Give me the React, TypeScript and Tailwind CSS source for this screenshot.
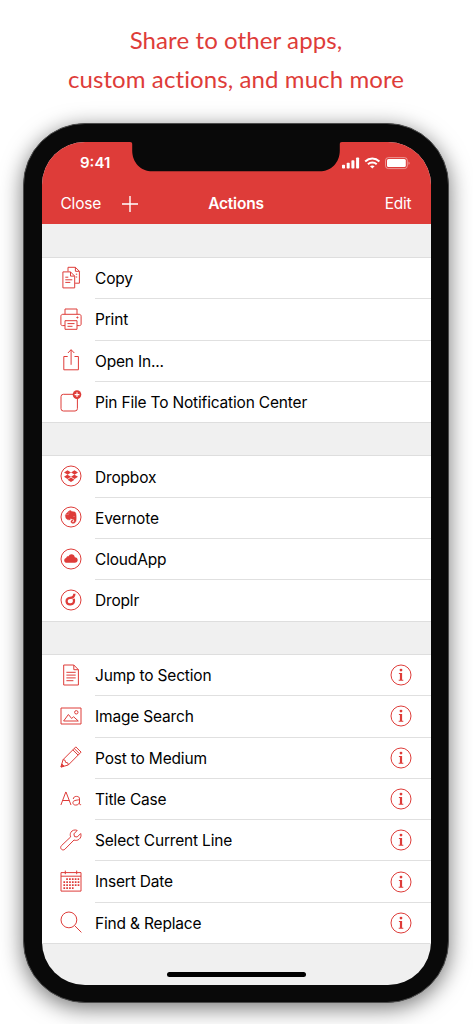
import type { ReactNode } from 'react'
import { FaDropbox, FaEvernote } from 'react-icons/fa'

interface Action {
  label: string
  icon: ReactNode
}

const shareActions: Action[] = [
  {
    label: 'Copy',
    icon: (
      <>
        <path d="M3.9 5.9h7.6l4.2 4.2v11.8H3.9zM11.5 5.9v4.2h4.2" />
        <path d="M9 5.5V1.3h7.4l4 4v11.9h-4.3M16.4 1.3v4h4" />
        <path d="M6.3 11.2h3M6.3 13.8h7M6.3 16.4h5M16.8 8.2h1.4M16.8 11h1.4" />
      </>
    ),
  },
  {
    label: 'Print',
    icon: (
      <>
        <path d="M6 7.3V2h12v5.3" />
        <path d="M6 18.6H3.4c-.9 0-1.5-.6-1.5-1.5V9.2c0-1.1.8-1.9 1.9-1.9h16.4c1.1 0 1.9.8 1.9 1.9v7.9c0 .9-.6 1.5-1.5 1.5H18" />
        <path d="M6 13.7h12v8.6H6zM8.5 16.6h7M8.5 19.3h5" />
        <circle cx="18.4" cy="10.5" r=".6" fill="currentColor" />
      </>
    ),
  },
  {
    label: 'Open In...',
    icon: <path d="M8.7 8.5H4.8v13.3h14.6V8.5h-3.9M12.1 16.8V1.8M8.9 5l3.2-3.3L15.3 5" />,
  },
  {
    label: 'Pin File To Notification Center',
    icon: (
      <>
        <rect x="2" y="5.3" width="16.4" height="16.7" rx="2.4" />
        <circle cx="18" cy="5.6" r="4.3" fill="currentColor" stroke="none" />
        <path d="M18 3.2V8M15.6 5.6h4.8" stroke="white" strokeWidth="1.1" />
      </>
    ),
  },
]

const serviceActions: Action[] = [
  {
    label: 'Dropbox',
    icon: (
      <>
        <circle cx="12" cy="12" r="10" />
        <FaDropbox x="5" y="5.1" size={14} stroke="none" />
      </>
    ),
  },
  {
    label: 'Evernote',
    icon: (
      <>
        <circle cx="12" cy="12" r="10" />
        <FaEvernote x="4.5" y="4.7" size={14.6} stroke="currentColor" strokeWidth="14" />
      </>
    ),
  },
  {
    label: 'CloudApp',
    icon: (
      <>
        <circle cx="12" cy="12" r="10" />
        <path
          d="M8 15.8c-1.6 0-2.8-1-2.8-2.4 0-1.3.9-2.2 2-2.4.1-1.3 1.1-2 2.3-1.8.6-1.3 1.6-2 2.9-2 1.9 0 3.2 1.3 3.4 3 1.7.1 2.9 1.3 2.9 2.8s-1.2 2.8-2.9 2.8z"
          fill="currentColor"
          stroke="none"
        />
      </>
    ),
  },
  {
    label: 'Droplr',
    icon: (
      <>
        <circle cx="12" cy="12" r="10" />
        <path d="M11 9.9c-2.3.2-3.6 1.6-3.4 3.6.2 1.9 1.900 3.100 4 2.900 2.300-.2 3.600-1.800 3.400-3.800l-.3-1.900M11 9.900c2.700-.1 4.300-1.400 4.400-4.200" strokeWidth="2.3" />
      </>
    ),
  },
]

const textActions: Action[] = [
  {
    label: 'Jump to Section',
    icon: (
      <>
        <path d="M4.7 2h10.1l4.6 4.7V22H4.7zM14.8 2v4.7h4.6" />
        <path d="M7.4 9.3h9.3M7.4 12.1h9.3M7.4 14.9h9.3M7.4 17.7h7" />
      </>
    ),
  },
  {
    label: 'Image Search',
    icon: (
      <>
        <path d="M2 4h20v16H2z" />
        <path d="M4.6 17l4.8-6.5 3.3 4 1.8-1.8 4.8 4.3z" />
        <circle cx="17.3" cy="8.3" r="1.7" />
      </>
    ),
  },
  {
    label: 'Post to Medium',
    icon: (
      <>
        <path d="M2 22l2-7.3L16.8 1.9l5.3 5.2L9.3 20zM4 14.7l1.9.4.7 2.3 2.2.5.5 2.1M13.8 4.9l5.3 5.2M15.2 3.5l5.3 5.2" />
        <path d="M2 22l.8-3 2.2 2.2z" fill="currentColor" />
      </>
    ),
  },
  {
    label: 'Title Case',
    icon: (
      <>
        <path d="M1.9 18L6.8 5h.2l5 13M3.7 13.5h6.6" />
        <path d="M14.3 12c.1-1.7 1.2-2.6 3.2-2.6 2 0 3 .9 3 2.5v4.6c0 .9.5 1.3 1.6 1.1M20.5 12.3c-.3 1.2-6.6.2-6.6 3.4 0 1.5 1.1 2.4 2.8 2.4 2.3 0 3.8-1.4 3.8-3.4" />
      </>
    ),
  },
  {
    label: 'Select Current Line',
    icon: (
      <path d="M18.2 2.4c-2.4-1-5.1-.2-6.3 1.9-.8 1.4-.9 3-.2 4.6L2.5 17.6c-1.1 1.1-1.1 2.6-.1 3.6s2.6 1 3.6-.1l9-9.1c1.7.7 3.5.5 4.9-.6 1.9-1.4 2.6-3.7 1.8-5.9L18.2 9l-2.7-.4-.6-2.7z" />
    ),
  },
  {
    label: 'Insert Date',
    icon: (
      <>
        <path d="M2 3.6h20v18.5H2zM2 7.2h20M6.3 1.6v3.6M17.7 1.6v3.6" />
        <path d="M7.2 10.2h13M4.4 13.2h16M4.4 16.2h16M4.4 19.2h10.2" strokeWidth="1.7" strokeDasharray="1.7 1.15" />
      </>
    ),
  },
  {
    label: 'Find & Replace',
    icon: (
      <>
        <circle cx="9.9" cy="9.9" r="7.9" />
        <path d="M15.6 15.6l6.8 6.8" />
      </>
    ),
  },
]

function InfoIcon() {
  return (
    <svg width="24" height="24" viewBox="0 0 24 24" fill="none" stroke="currentColor" className="mr-[17.5px] shrink-0 text-[#de3c39]">
      <circle cx="12" cy="12" r="10" />
      <circle cx="12" cy="7.1" r="1.4" fill="currentColor" stroke="none" />
      <path d="M9.9 10.1h3.2v6.7h1.2v1H9.7v-1h1.2v-5.7h-1z" fill="currentColor" stroke="none" />
    </svg>
  )
}

function ActionGroup({ actions, info = false }: { actions: Action[]; info?: boolean }) {
  return (
    <ul className="border-b border-[#dedede] bg-white shadow-[0_-1px_0_#dedede]">
      {actions.map((action, i) => {
        const last = i === actions.length - 1
        return (
          <li key={action.label} className={`flex items-center pl-[16.5px] ${last ? 'h-[40.3px]' : 'h-[41.3px]'}`}>
            <svg
              width="24"
              height="24"
              viewBox="0 0 24 24"
              fill="none"
              stroke="currentColor"
              strokeLinejoin="round"
              className="mb-[2px] shrink-0 overflow-visible text-[#de3c39]"
            >
              {action.icon}
            </svg>
            <div className={`ml-[12.5px] flex h-full flex-1 items-center justify-between ${last ? '' : 'border-b border-[#e0e0e0]'}`}>
              <span className="whitespace-nowrap pt-px text-[15.5px] tracking-[-0.18px] text-black">{action.label}</span>
              {info && <InfoIcon />}
            </div>
          </li>
        )
      })}
    </ul>
  )
}

function StatusIcons() {
  return (
    <svg width="70" height="14" viewBox="0 0 70 14" fill="white">
      <rect x="1" y="8.8" width="3" height="3.7" rx=".8" />
      <rect x="5.7" y="6.8" width="3" height="5.7" rx=".8" />
      <rect x="10.4" y="4.3" width="3" height="8.2" rx=".8" />
      <rect x="15.1" y="1.5" width="3" height="11" rx=".8" />
      <g fill="none" stroke="white" strokeWidth="2">
        <path d="M24.2 5.4c4-3.8 10.2-3.8 14.2 0" />
        <path d="M26.9 8.3c2.5-2.3 6.3-2.3 8.8 0" />
      </g>
      <path d="M31.3 12.6L29 10.3c1.3-1.1 3.3-1.1 4.6 0z" />
      <rect x="44.5" y="1.6" width="21.8" height="11" rx="2.8" fill="none" stroke="white" strokeOpacity=".45" />
      <rect x="46" y="3.1" width="18.8" height="8" rx="1.5" />
      <path d="M67.5 5.4c1.5.5 1.5 2.9 0 3.4z" opacity=".5" />
    </svg>
  )
}

// Black cut-out with flared upper corners
function Notch() {
  return (
    <svg width="212" height="30" viewBox="0 0 212 30" className="absolute left-[88px] top-0" fill="#090909">
      <path d="M0 0h212c-1.6 0-2.2.7-2.2 2.2v6.3c0 12-8.6 20.8-20.2 20.8H22.4C10.8 29.3 2.2 20.5 2.2 8.5V2.2C2.2.7 1.6 0 0 0z" />
    </svg>
  )
}

export default function App() {
  return (
    <div className="flex h-[1024px] w-[473px] flex-col items-center overflow-hidden bg-white">
      <h1 className="mr-px h-[123px] shrink-0 pt-5 text-center font-['Lato',sans-serif] text-[24px] leading-[39px] tracking-[0.1px] text-[#de3c39]">
        Share to other apps,
        <br />
        custom actions, and much more
      </h1>

      <div className="mr-px h-[880px] w-[426px] shrink-0 rounded-[62px] border border-[#4a4a4a] bg-[#090909] p-[18px] shadow-[0_5px_22px_rgba(0,0,0,0.55)]">
        <div className="relative flex h-[842.5px] w-[388.5px] flex-col overflow-hidden rounded-[43px] bg-[#f0f0f0] font-['Inter',sans-serif]">
          <header className="h-[82px] shrink-0 bg-[#de3c39] text-white">
            <div className="flex h-[42px] items-center justify-between pl-[38px] pr-5">
              <span className="text-[15px] font-semibold">9:41</span>
              <StatusIcons />
            </div>
            <div className="grid h-10 grid-cols-3 items-center pl-[18.5px] pr-[19px] text-[15.5px] tracking-[-0.2px]">
              <div className="flex items-center gap-5">
                <span>Close</span>
                <svg width="18" height="18" viewBox="0 0 18 18" stroke="white" strokeWidth="1.4">
                  <path d="M9 1v16M1 9h16" />
                </svg>
              </div>
              <span className="text-center font-semibold">Actions</span>
              <span className="text-right">Edit</span>
            </div>
          </header>
          <Notch />

          <main className="flex flex-col gap-[33.3px] pt-[34px]">
            <ActionGroup actions={shareActions} />
            <ActionGroup actions={serviceActions} />
            <ActionGroup actions={textActions} info />
          </main>

          <div className="absolute bottom-2 left-[124.5px] h-[5px] w-[139px] rounded-full bg-black" />
        </div>
      </div>
    </div>
  )
}
